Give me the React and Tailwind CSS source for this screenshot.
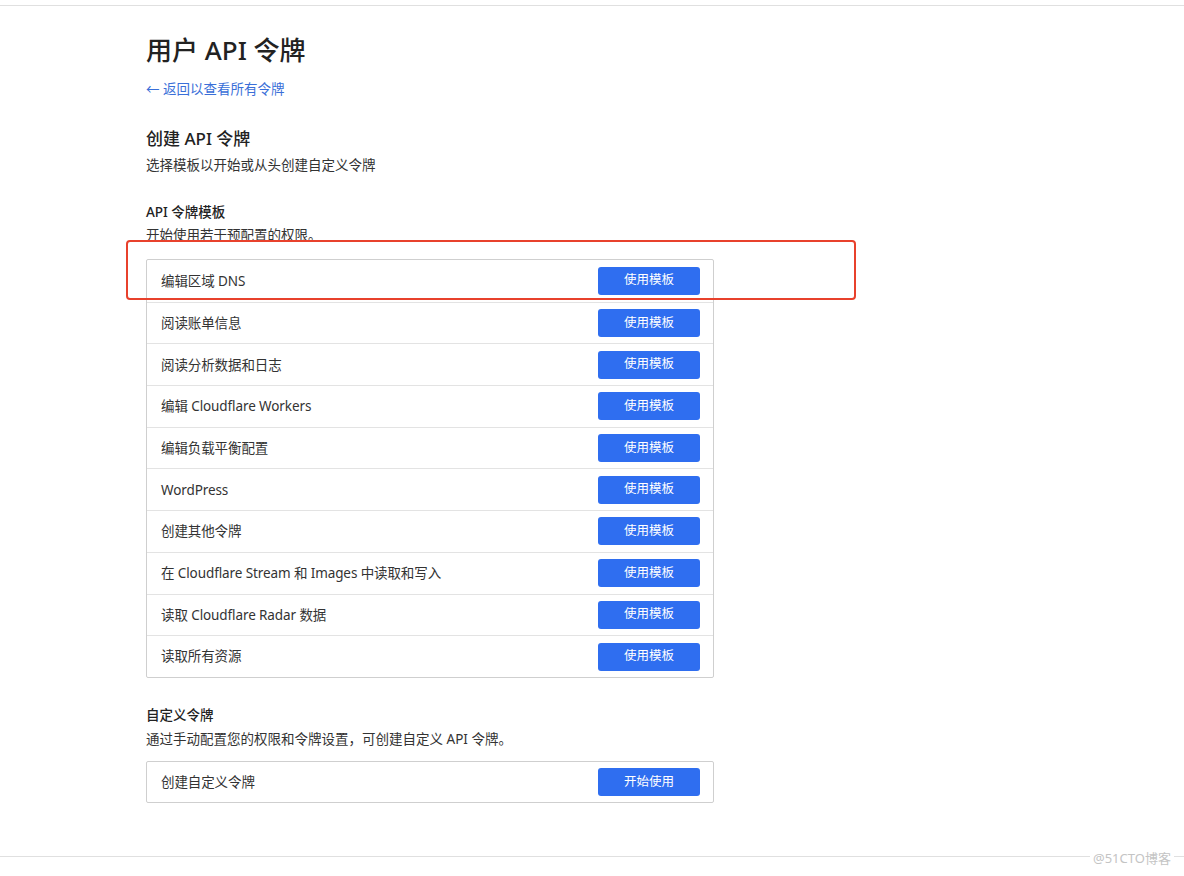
import React from "react"

const templates = [
    "编辑区域 DNS",
    "阅读账单信息",
    "阅读分析数据和日志",
    "编辑 Cloudflare Workers",
    "编辑负载平衡配置",
    "WordPress",
    "创建其他令牌",
    "在 Cloudflare Stream 和 Images 中读取和写入",
    "读取 Cloudflare Radar 数据",
    "读取所有资源",
]

function Row({ label, action, first, h = "h-[41.7px]" }) {
    return (
        <div className={`flex items-center justify-between ${h} pl-[14px] pr-[13px] ${first ? "" : "border-t border-[#e3e3e3]"}`}>
            <span className="text-[13.5px] text-[#333] tracking-[-0.1px]">{label}</span>
            <button className="w-[102px] h-[28px] rounded-[3px] bg-[#2f6ef0] text-white text-[12.5px]">{action}</button>
        </div>
    )
}

export default function App() {
    return (
        <div
            className="relative min-h-[876px] bg-white text-[#333]"
            style={{ fontFamily: '"Noto Sans", "Noto Sans CJK SC", sans-serif' }}
        >
            <div className="h-[5px]" />
            <div className="border-t border-[#e0e0e0]" />

            <div className="pl-[146px]">
                <h1 className="mt-[26px] text-[26px] leading-[36px] font-medium text-[#222]">用户 API 令牌</h1>
                <a className="mt-[11px] block text-[13.5px] leading-[20px] text-[#3a6fd8]">← 返回以查看所有令牌</a>

                <h2 className="mt-[28px] text-[17px] leading-[24px] font-medium text-[#222]">创建 API 令牌</h2>
                <p className="mt-[4px] text-[13.5px] leading-[20px]">选择模板以开始或从头创建自定义令牌</p>

                <h3 className="mt-[27px] text-[13.5px] leading-[20px] font-medium text-[#222]">API 令牌模板</h3>
                <p className="mt-[3px] text-[13.5px] leading-[20px]">开始使用若干预配置的权限。</p>

                <div className="mt-[14px] w-[568px] border border-[#cfcfcf] rounded-[2px]">
                    {templates.map((t, i) => (
                        <Row key={t} label={t} action="使用模板" first={i === 0} />
                    ))}
                </div>

                <h3 className="mt-[27px] text-[13.5px] leading-[20px] font-medium text-[#222]">自定义令牌</h3>
                <p className="mt-[4px] text-[13.5px] leading-[20px]">通过手动配置您的权限和令牌设置，可创建自定义 API 令牌。</p>

                <div className="mt-[12px] w-[568px] border border-[#cfcfcf] rounded-[2px]">
                    <Row label="创建自定义令牌" action="开始使用" first h="h-[40px]" />
                </div>
            </div>

            <div className="mt-[53px] border-t border-[#e0e0e0]" />

            {/* red highlight box over first row */}
            <div className="absolute left-[126px] top-[240px] w-[730px] h-[60px] border-2 border-[#e8412c] rounded-[4px] pointer-events-none" />

            {/* watermark */}
            <div className="absolute left-[1090px] top-[848px] bg-white px-[3px] text-[13px] leading-[20px] text-[#c4c4c4]">@51CTO博客</div>
        </div>
    )
}
